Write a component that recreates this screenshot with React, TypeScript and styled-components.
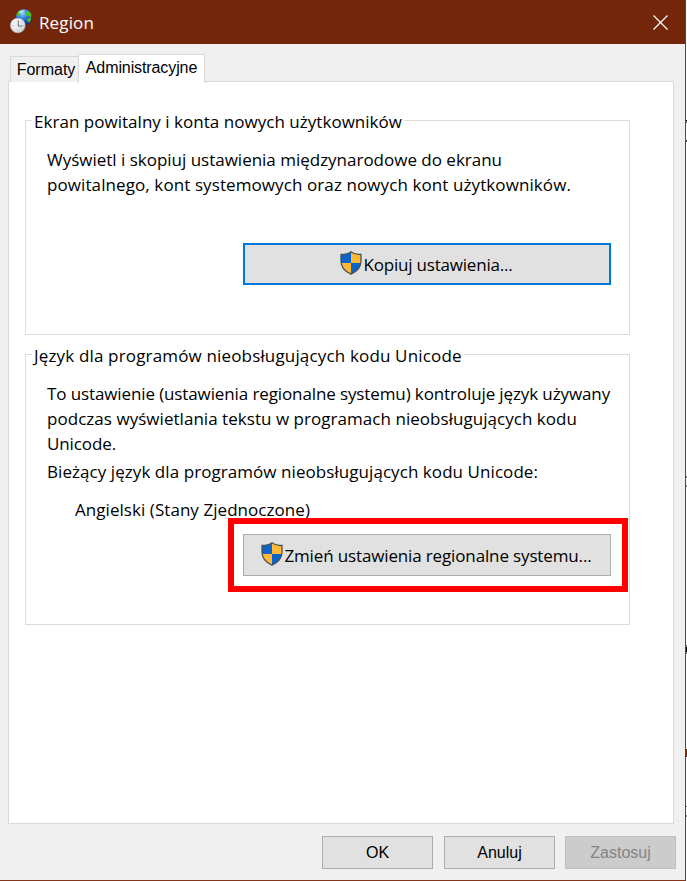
import React from "react";
import styled, { createGlobalStyle, css } from "styled-components";

const GlobalStyle = createGlobalStyle`
  *, *::before, *::after { box-sizing: border-box; }
  html, body { margin: 0; background: #fff; overflow: hidden; }
  button { margin: 0; padding: 0; border-radius: 0; }
`;

const uiFont = css`
  font-family: "Open Sans", "Noto Sans", sans-serif;
  font-size: 17px;
  line-height: 25px;
  white-space: nowrap;
`;

const Screen = styled.div`
  display: grid;
  grid-template-columns: 686px 1px;
  width: 687px;
  height: 881px;
`;

const Dialog = styled.main`
  display: flex;
  flex-direction: column;
  background: #f0f0f0;
  border-right: 1px solid #84351c;
  border-bottom: 1px solid #84351c;
  color: #000;
`;

/* Sliver of the document that shows beside the dialog */
const Backdrop = styled.div`
  background: linear-gradient(
    #fff 0 120px, #000 120px 121px, #777 121px 123px, #fff 123px 140px, #444 140px 142px,
    #fff 142px 476px, #777 476px 478px, #fff 478px 485px, #888 485px 487px,
    #fff 487px 645px, #888 645px 647px, #000 647px 652px, #888 652px 654px,
    #fff 654px 749px, #74260b 749px 757px, #fff 757px 806px, #777 806px 807px,
    #fff 807px 815px, #777 815px 817px, #fff 817px
  );
`;

const TitleBar = styled.header`
  display: flex;
  align-items: center;
  width: 685px;
  height: 44px;
  padding: 0 17px 0 10px;
  background: #74260b;
  color: #fff;
`;

const Title = styled.h1`
  ${uiFont}
  flex: 1;
  margin: 0 0 0 5px;
  font-weight: 400;
  letter-spacing: 0.13px;
`;

const CloseButton = styled.button`
  display: flex;
  border: 0;
  background: none;
`;

const Tabs = styled.nav`
  display: flex;
  align-items: flex-end;
  height: 38px;
  padding-left: 10px;
`;

const Tab = styled.button<{ $active?: boolean }>`
  flex: none;
  width: ${(p) => (p.$active ? 127 : 68)}px;
  height: ${(p) => (p.$active ? 29 : 26)}px;
  padding-top: 0;
  padding-bottom: ${(p) => (p.$active ? 3 : 0)}px;
  padding-left: ${(p) => (p.$active ? 0 : 3)}px;
  border: 1px solid #d9d9d9;
  border-bottom: 0;
  border-right-width: ${(p) => (p.$active ? 1 : 0)}px;
  background: ${(p) => (p.$active ? "#fff" : "#f0f0f0")};
  margin-bottom: ${(p) => (p.$active ? -1 : 0)}px;
  z-index: ${(p) => (p.$active ? 1 : 0)};
  color: #000;
  font: 16px/20px "Liberation Sans", Arial, sans-serif;
  letter-spacing: ${(p) => (p.$active ? -0.1 : 0)}px;
  white-space: nowrap;
`;

const Page = styled.section`
  display: flex;
  flex-direction: column;
  gap: 7px;
  width: 666px;
  height: 743px;
  margin: -1px 0 0 8px;
  padding: 26px 0 0 16px;
  border: 1px solid #d9d9d9;
  background: #fff;
`;

const Group = styled.fieldset<{ $height: number }>`
  flex: none;
  display: flex;
  flex-direction: column;
  width: 605px;
  height: ${(p) => p.$height}px;
  min-width: 0;
  margin: 0;
  padding: 14px 18px 0 21px;
  border: 1px solid #dcdcdc;
`;

const Legend = styled.legend<{ $spacing: number }>`
  ${uiFont}
  height: 25px;
  margin-left: -15px;
  padding: 0 2px;
  line-height: 27px;
  letter-spacing: ${(p) => p.$spacing}px;
`;

const Paragraph = styled.p<{ $gap?: number; $indent?: number }>`
  margin: ${(p) => p.$gap ?? 0}px 0 0 ${(p) => p.$indent ?? 0}px;
`;

const Line = styled.span<{ $spacing: number }>`
  ${uiFont}
  display: block;
  letter-spacing: ${(p) => p.$spacing}px;
`;

const ShieldButton = styled.button<{ $focused?: boolean; $spacing: number }>`
  ${uiFont}
  display: flex;
  align-items: center;
  justify-content: center;
  gap: 1px;
  width: 368px;
  height: 42px;
  border: ${(p) => (p.$focused ? "2px solid #0078d7" : "1px solid #adadad")};
  background: #e1e1e1;
  color: #000;
  letter-spacing: ${(p) => p.$spacing}px;

  svg { flex: none; margin-bottom: 3px; margin-left: -1px; }
`;

const ActionSlot = styled.div<{ $gap: number }>`
  position: relative;
  align-self: flex-end;
  margin-top: ${(p) => p.$gap}px;
`;

const Highlight = styled.div`
  position: absolute;
  inset: -16px -17px -16px -15px;
  border: 6px solid #f00;
  pointer-events: none;
`;

const Footer = styled.footer`
  display: flex;
  justify-content: flex-end;
  gap: 11px;
  margin-top: 12px;
  padding-right: 9px;
  & > :last-child { margin-left: -1px; }
`;

const DialogButton = styled.button`
  width: 111px;
  height: 33px;
  border: 1px solid #adadad;
  background: #e1e1e1;
  color: #000;
  font: 16px/20px "Liberation Sans", Arial, sans-serif;

  &:disabled {
    border-color: #bfbfbf;
    background: #ccc;
    color: #838383;
  }
`;

const RegionIcon = () => (
  <svg width="24" height="26" viewBox="0 0 24 26">
    <defs>
      <radialGradient id="ocean" cx=".4" cy=".25" r=".8">
        <stop offset="0" stopColor="#8fd4ff" />
        <stop offset=".45" stopColor="#2877d8" />
        <stop offset="1" stopColor="#08237c" />
      </radialGradient>
      <linearGradient id="dial" x2="1" y2="1">
        <stop offset="0" stopColor="#fff" />
        <stop offset="1" stopColor="#cfd3d6" />
      </linearGradient>
    </defs>
    <circle cx="14" cy="8.300" r="8.100" fill="url(#ocean)" />
    <path d="M6.500 5Q8.500 1.500 12 .8L11.500 3l-2 1.200-.5 2.300-2 1.500zM17 1.500q3.500 1 4.500 4.500l-1 2-2-1-1.500.5-1-2.500zM17 10l3.500-1.500.7.500q-.4 3-2.200 4.800l-1.500-1.800z" fill="#4fc01f" />
    <path d="M9 2.500q3-2 6-1-2 2-6 3z" fill="#e1f8ff" opacity=".65" />
    <circle cx="7.800" cy="16.500" r="7.300" fill="url(#dial)" stroke="#b8bbbc" strokeWidth=".7" />
    <path d="M7.800 10.600v1.200M7.800 21.300v1.200M2 16.500h1.200M12.500 16.500h1.200M3.800 12.500l.6.6M11.800 12.500l-.6.6M3.800 20.500l.6-.6M11.800 20.500l-.6-.6" stroke="#8b9298" strokeWidth=".7" />
    <path d="M8.300 11.800v5.200h3.900" fill="none" stroke="#68717a" strokeWidth="1" />
  </svg>
);

const CloseIcon = () => (
  <svg width="15" height="15" viewBox="0 0 15 15">
    <path d="M.5.5l14 14M14.500.5l-14 14" stroke="#fff" strokeWidth="1.200" />
  </svg>
);

const shieldPath = "M11 .8C8.500 2.600 5 3.500 1 3.500V10c0 6.500 4 10.500 10 13.200C17 20.500 21 16.500 21 10V3.500C17 3.500 13.500 2.600 11 .8z";

const ShieldIcon = ({ id }: { id: string }) => (
  <svg width="22" height="24" viewBox="0 0 22 24">
    <clipPath id={id}><path d={shieldPath} /></clipPath>
    <g clipPath={`url(#${id})`}>
      <path d="M0 0h11v12H0zM11 12h11v12H11z" fill="#0b64c8" />
      <path d="M11 0h11v12H11zM0 12h11v12H0z" fill="#ffb935" />
    </g>
    <path d={shieldPath} fill="none" stroke="#4c5157" strokeWidth="1.300" />
  </svg>
);

export default function App() {
  return (
    <>
      <GlobalStyle />
      <Screen>
        <Dialog>
          <TitleBar>
            <RegionIcon />
            <Title>Region</Title>
            <CloseButton aria-label="Zamknij"><CloseIcon /></CloseButton>
          </TitleBar>
          <Tabs>
            <Tab>Formaty</Tab>
            <Tab $active>Administracyjne</Tab>
          </Tabs>
          <Page>
            <Group $height={227}>
              <Legend $spacing={0.03}>Ekran powitalny i konta nowych użytkowników</Legend>
              <Paragraph>
                <Line $spacing={-0.01}>Wyświetl i skopiuj ustawienia międzynarodowe do ekranu</Line>
                <Line $spacing={0.094}>powitalnego, kont systemowych oraz nowych kont użytkowników.</Line>
              </Paragraph>
              <ActionSlot $gap={46}>
                <ShieldButton $focused $spacing={-0.2}>
                  <ShieldIcon id="shield-copy" />Kopiuj ustawienia...
                </ShieldButton>
              </ActionSlot>
            </Group>
            <Group $height={283}>
              <Legend $spacing={0.16}>Język dla programów nieobsługujących kodu Unicode</Legend>
              <Paragraph>
                <Line $spacing={-0.114}>To ustawienie (ustawienia regionalne systemu) kontroluje język używany</Line>
                <Line $spacing={0.04}>podczas wyświetlania tekstu w programach nieobsługujących kodu</Line>
                <Line $spacing={-0.11}>Unicode.</Line>
              </Paragraph>
              <Paragraph $gap={3}>
                <Line $spacing={0.063}>Bieżący język dla programów nieobsługujących kodu Unicode:</Line>
              </Paragraph>
              <Paragraph $gap={13} $indent={28}>
                <Line $spacing={0.055}>Angielski (Stany Zjednoczone)</Line>
              </Paragraph>
              <ActionSlot $gap={12}>
                <ShieldButton $spacing={-0.14}>
                  <ShieldIcon id="shield-change" />Zmień ustawienia regionalne systemu...
                </ShieldButton>
                <Highlight />
              </ActionSlot>
            </Group>
          </Page>
          <Footer>
            <DialogButton>OK</DialogButton>
            <DialogButton>Anuluj</DialogButton>
            <DialogButton disabled>Zastosuj</DialogButton>
          </Footer>
        </Dialog>
        <Backdrop />
      </Screen>
    </>
  );
}
